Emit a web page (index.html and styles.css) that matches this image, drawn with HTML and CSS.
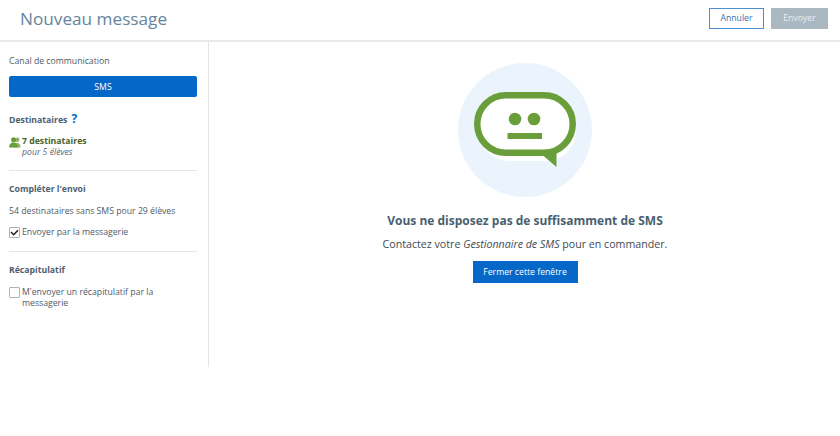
FILE: index.html
```html
<!DOCTYPE html>
<html lang="fr">
<head>
<meta charset="utf-8">
<title>Nouveau message</title>
<link rel="stylesheet" href="styles.css">
</head>
<body>
<header class="topbar">
  <h1 class="title">Nouveau message</h1>
  <div class="actions">
    <button class="btn btn-outline">Annuler</button>
    <button class="btn btn-disabled">Envoyer</button>
  </div>
</header>
<div class="layout">
  <aside class="sidebar">
    <p class="channel-label">Canal de communication</p>
    <button class="channel-btn">SMS</button>
    <h2 class="section-title dest-title">Destinataires <span class="help">?</span></h2>
    <div class="recipients">
      <svg class="people" width="12" height="11" viewBox="0 0 13 12"><circle cx="9" cy="3" r="2.400" fill="#8fb56a"/><path d="M5 11.500c0-3 1.500-5 4-5s3.600 2 3.600 5z" fill="#8fb56a"/><circle cx="5" cy="3" r="2.800" fill="#6a9e3a"/><path d="M0 11.500c0-3.500 2-5.500 4.800-5.500s4.700 2 4.700 5.500z" fill="#6a9e3a"/></svg>
      <div>
        <div class="rec-count">7 destinataires</div>
        <div class="rec-sub">pour 5 élèves</div>
      </div>
    </div>
    <hr class="sep sep-one">
    <h2 class="section-title">Compléter l'envoi</h2>
    <p class="plain">54 destinataires sans SMS pour 29 élèves</p>
    <div class="check-row">
      <span class="box"><svg width="9" height="7" viewBox="0 0 10 8"><path d="M1 3.500l3 3L9 1.500" fill="none" stroke="#222" stroke-width="1.800"/></svg></span>
      <span>Envoyer par la messagerie</span>
    </div>
    <hr class="sep sep-two">
    <h2 class="section-title">Récapitulatif</h2>
    <div class="check-row recap">
      <span class="box"></span>
      <span>M'envoyer un récapitulatif par la messagerie</span>
    </div>
  </aside>
  <main class="content">
    <div class="disc">
      <svg width="106" height="78" viewBox="0 0 106 78">
        <rect x="7" y="9" width="97" height="61" rx="30" fill="#fff"/>
        <rect x="5.250" y="4.250" width="95.500" height="57.500" rx="28.750" fill="#fff" stroke="#6a9e3a" stroke-width="6.500"/>
        <path d="M68 62L84.500 76V60Z" fill="#6a9e3a"/>
        <circle cx="43" cy="28" r="6.300" fill="#6a9e3a"/>
        <circle cx="62" cy="28" r="6.300" fill="#6a9e3a"/>
        <rect x="35.500" y="42" width="34.500" height="6" fill="#6a9e3a"/>
      </svg>
    </div>
    <h2 class="msg-title">Vous ne disposez pas de suffisamment de SMS</h2>
    <p class="msg-text">Contactez votre <em>Gestionnaire de SMS</em> pour en commander.</p>
    <button class="close-btn">Fermer cette fenêtre</button>
  </main>
</div>
</body>
</html>
```
FILE: styles.css
```css
* { box-sizing: border-box; }
html, body { margin: 0; padding: 0; }
body {
  width: 840px;
  height: 436px;
  background: #fff;
  font-family: "Open Sans", sans-serif;
  font-size: 8.700px;
  color: #4f5a64;
  overflow: hidden;
}
.topbar {
  height: 42px;
  border-bottom: 2px solid #e6eaec;
  display: flex;
  align-items: center;
  justify-content: space-between;
  padding: 0 12px 4px 20px;
}
.title {
  margin: 0;
  font-size: 17.200px;
  font-weight: 400;
  color: #64859c;
}
.actions { display: flex; gap: 7px; }
.btn {
  width: 55px;
  height: 21px;
  padding: 0;
  font: 400 8.700px "Open Sans", sans-serif;
}
.btn-outline { background: #fff; border: 1px solid #4d8fd4; color: #3c6fb4; }
.btn-disabled { width: 57px; background: #a9b8c1; border: 0; color: #e9eef1; }
.layout { display: flex; height: 325px; }
.sidebar {
  width: 209px;
  border-right: 1px solid #e1e5e8;
  padding: 13px 11px 0 9px;
}
.channel-label { margin: 0 0 8px; line-height: 13px; }
.channel-btn {
  display: block;
  width: 188px;
  height: 21px;
  padding: 0;
  background: #0568c9;
  border: 0;
  border-radius: 2px;
  color: #fff;
  font: 400 8.700px "Open Sans", sans-serif;
}
.section-title {
  margin: 0;
  font-size: 8.700px;
  line-height: 13px;
  font-weight: 700;
  color: #4e6070;
}
.dest-title { margin-top: 15px; }
.help { color: #0568c9; font-size: 12px; margin-left: 2px; line-height: 13px; }
.recipients { display: flex; gap: 1px; margin-top: 9px; }
.people { margin-top: 1px; }
.rec-count { font-weight: 700; color: #44622c; line-height: 11px; }
.rec-sub { font-style: italic; line-height: 11px; color: #5c666f; }
.sep { border: 0; border-top: 1px solid #e3e7ea; margin: 0; }
.sep-one { margin-top: 12px; margin-bottom: 12px; }
.plain { margin: 9px 0 9px; line-height: 13px; }
.check-row { display: flex; gap: 2px; line-height: 11px; }
.box {
  flex: none;
  width: 11px;
  height: 11px;
  border: 1px solid #a9b5bd;
  border-radius: 1px;
  display: flex;
  align-items: center;
  justify-content: center;
}
.sep-two { margin-top: 13px; margin-bottom: 12px; }
.recap { margin-top: 10px; }
.content {
  flex: 1;
  display: flex;
  flex-direction: column;
  align-items: center;
  padding: 21px 0 0 1px;
}
.disc {
  width: 134px;
  height: 134px;
  border-radius: 50%;
  background: #ebf4fd;
  display: flex;
  align-items: center;
  justify-content: center;
}
.msg-title {
  margin: 15px 0 0;
  font-size: 12px;
  line-height: 17px;
  font-weight: 700;
  color: #4a5f70;
}
.msg-text { margin: 7px 0 0; font-size: 10.650px; line-height: 16px; color: #414a52; }
.close-btn {
  margin-top: 9px;
  width: 105px;
  height: 22px;
  padding: 0;
  background: #0568c9;
  border: 0;
  color: #fff;
  font: 400 8.700px "Open Sans", sans-serif;
}
```
